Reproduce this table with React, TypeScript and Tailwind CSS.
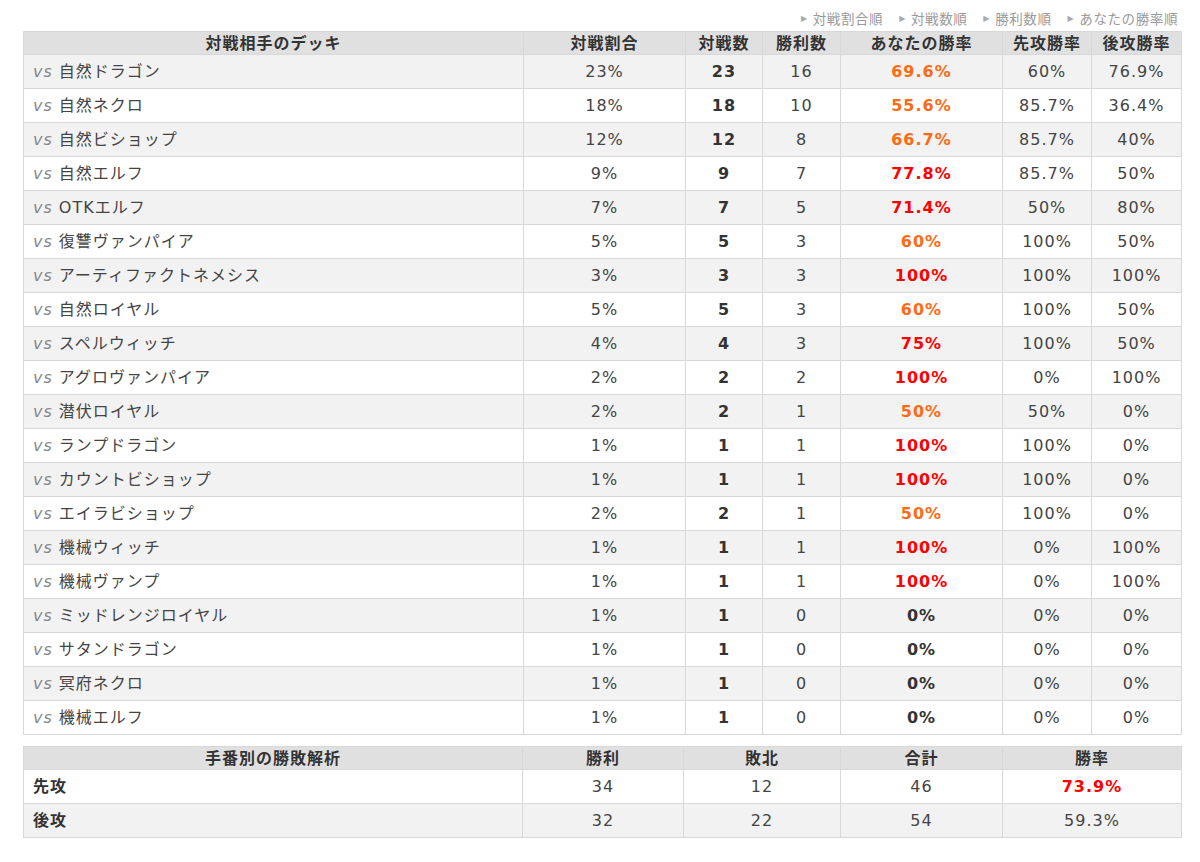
const rows: [string, string, number, number, string, "o" | "r" | "g", string, string][] = [
  ["自然ドラゴン", "23%", 23, 16, "69.6%", "o", "60%", "76.9%"],
  ["自然ネクロ", "18%", 18, 10, "55.6%", "o", "85.7%", "36.4%"],
  ["自然ビショップ", "12%", 12, 8, "66.7%", "o", "85.7%", "40%"],
  ["自然エルフ", "9%", 9, 7, "77.8%", "r", "85.7%", "50%"],
  ["OTKエルフ", "7%", 7, 5, "71.4%", "r", "50%", "80%"],
  ["復讐ヴァンパイア", "5%", 5, 3, "60%", "o", "100%", "50%"],
  ["アーティファクトネメシス", "3%", 3, 3, "100%", "r", "100%", "100%"],
  ["自然ロイヤル", "5%", 5, 3, "60%", "o", "100%", "50%"],
  ["スペルウィッチ", "4%", 4, 3, "75%", "r", "100%", "50%"],
  ["アグロヴァンパイア", "2%", 2, 2, "100%", "r", "0%", "100%"],
  ["潜伏ロイヤル", "2%", 2, 1, "50%", "o", "50%", "0%"],
  ["ランプドラゴン", "1%", 1, 1, "100%", "r", "100%", "0%"],
  ["カウントビショップ", "1%", 1, 1, "100%", "r", "100%", "0%"],
  ["エイラビショップ", "2%", 2, 1, "50%", "o", "100%", "0%"],
  ["機械ウィッチ", "1%", 1, 1, "100%", "r", "0%", "100%"],
  ["機械ヴァンプ", "1%", 1, 1, "100%", "r", "0%", "100%"],
  ["ミッドレンジロイヤル", "1%", 1, 0, "0%", "g", "0%", "0%"],
  ["サタンドラゴン", "1%", 1, 0, "0%", "g", "0%", "0%"],
  ["冥府ネクロ", "1%", 1, 0, "0%", "g", "0%", "0%"],
  ["機械エルフ", "1%", 1, 0, "0%", "g", "0%", "0%"],
];

const rateColor = {
  o: "text-[#ff6a13]",
  r: "text-[#ff0000]",
  g: "text-[#333]",
};

const th = "border border-[#d8d8d8] h-[23px] p-0 text-center font-bold text-[#333] leading-[21px]";
const td = "border border-[#d8d8d8] h-[34px] p-0 text-center leading-[32px]";

const sorts = ["対戦割合順", "対戦数順", "勝利数順", "あなたの勝率順"];

export default function App() {
  return (
    <div
      className="bg-white min-h-[862px] text-[16px] tracking-[1px] text-[#444]"
      style={{ fontFamily: '"DejaVu Sans", "Noto Sans CJK JP", sans-serif' }}
    >
      <div className="ml-[23px] w-[1158px] pt-[7px]">
        <div className="flex justify-end gap-[16px] pr-[3px] text-[13.5px] tracking-[0.6px] text-[#999] h-[24px] leading-[20px]">
          {sorts.map((s) => (
            <span key={s} className="flex items-center">
              <span className="text-[8px] mr-[5px] text-[#aaa]">▶</span>
              {s}
            </span>
          ))}
        </div>

        <table className="w-[1158px] table-fixed border-collapse">
          <thead>
            <tr className="bg-[#e0e0e0]">
              <th className={`${th} w-[500px]`}>対戦相手のデッキ</th>
              <th className={`${th} w-[162px]`}>対戦割合</th>
              <th className={`${th} w-[77px]`}>対戦数</th>
              <th className={`${th} w-[78px]`}>勝利数</th>
              <th className={`${th} w-[162px]`}>あなたの勝率</th>
              <th className={`${th} w-[89px]`}>先攻勝率</th>
              <th className={`${th} w-[90px]`}>後攻勝率</th>
            </tr>
          </thead>
          <tbody>
            {rows.map((r, i) => (
              <tr key={r[0]} className={i % 2 === 0 ? "bg-[#f2f2f2]" : "bg-white"}>
                <td className={`${td} text-left pl-[9px]`}>
                  <span className="italic text-[#888] mr-[6px]">vs</span>
                  {r[0]}
                </td>
                <td className={td}>{r[1]}</td>
                <td className={`${td} font-bold text-[#333]`}>{r[2]}</td>
                <td className={td}>{r[3]}</td>
                <td className={`${td} font-bold ${rateColor[r[5]]}`}>{r[4]}</td>
                <td className={td}>{r[6]}</td>
                <td className={td}>{r[7]}</td>
              </tr>
            ))}
          </tbody>
        </table>

        <table className="w-[1158px] table-fixed border-collapse mt-[11px]">
          <thead>
            <tr className="bg-[#e0e0e0]">
              <th className={`${th} w-[499px]`}>手番別の勝敗解析</th>
              <th className={`${th} w-[161px]`}>勝利</th>
              <th className={`${th} w-[157px]`}>敗北</th>
              <th className={`${th} w-[162px]`}>合計</th>
              <th className={`${th} w-[179px]`}>勝率</th>
            </tr>
          </thead>
          <tbody>
            <tr className="bg-white">
              <td className={`${td} text-left pl-[9px] font-bold text-[#333]`}>先攻</td>
              <td className={td}>34</td>
              <td className={td}>12</td>
              <td className={td}>46</td>
              <td className={`${td} font-bold text-[#ff0000]`}>73.9%</td>
            </tr>
            <tr className="bg-[#f2f2f2]">
              <td className={`${td} text-left pl-[9px] font-bold text-[#333]`}>後攻</td>
              <td className={td}>32</td>
              <td className={td}>22</td>
              <td className={td}>54</td>
              <td className={td}>59.3%</td>
            </tr>
          </tbody>
        </table>
      </div>
    </div>
  );
}
